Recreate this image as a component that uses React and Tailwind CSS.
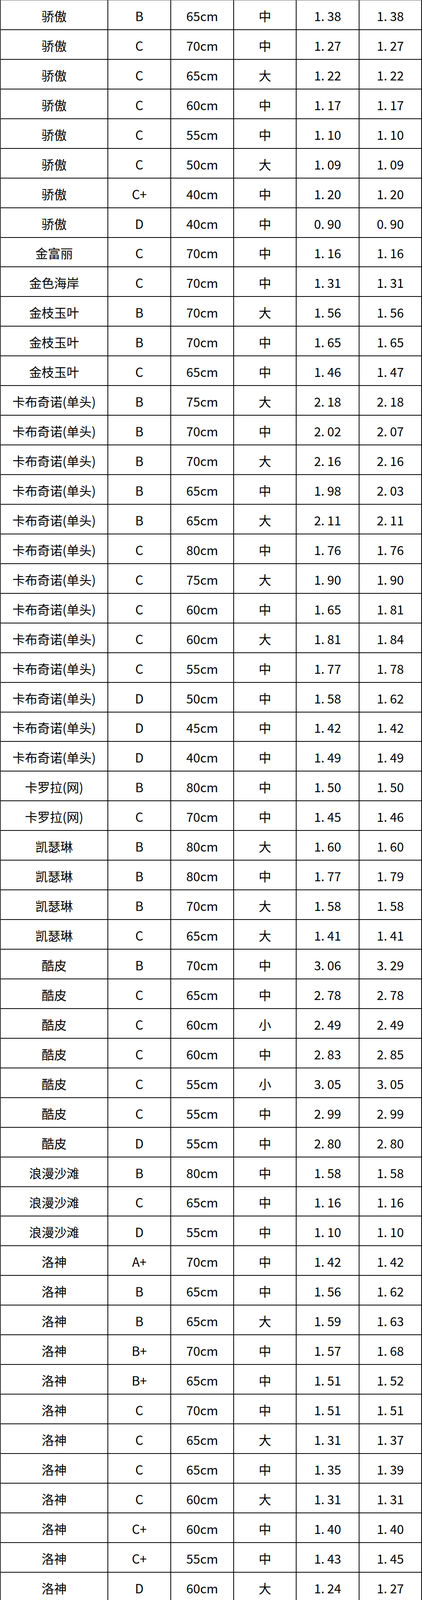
import React from 'react';

const rows = [
  ['骄傲', 'B', '65cm', '中', '1.38', '1.38'],
  ['骄傲', 'C', '70cm', '中', '1.27', '1.27'],
  ['骄傲', 'C', '65cm', '大', '1.22', '1.22'],
  ['骄傲', 'C', '60cm', '中', '1.17', '1.17'],
  ['骄傲', 'C', '55cm', '中', '1.10', '1.10'],
  ['骄傲', 'C', '50cm', '大', '1.09', '1.09'],
  ['骄傲', 'C+', '40cm', '中', '1.20', '1.20'],
  ['骄傲', 'D', '40cm', '中', '0.90', '0.90'],
  ['金富丽', 'C', '70cm', '中', '1.16', '1.16'],
  ['金色海岸', 'C', '70cm', '中', '1.31', '1.31'],
  ['金枝玉叶', 'B', '70cm', '大', '1.56', '1.56'],
  ['金枝玉叶', 'B', '70cm', '中', '1.65', '1.65'],
  ['金枝玉叶', 'C', '65cm', '中', '1.46', '1.47'],
  ['卡布奇诺(单头)', 'B', '75cm', '大', '2.18', '2.18'],
  ['卡布奇诺(单头)', 'B', '70cm', '中', '2.02', '2.07'],
  ['卡布奇诺(单头)', 'B', '70cm', '大', '2.16', '2.16'],
  ['卡布奇诺(单头)', 'B', '65cm', '中', '1.98', '2.03'],
  ['卡布奇诺(单头)', 'B', '65cm', '大', '2.11', '2.11'],
  ['卡布奇诺(单头)', 'C', '80cm', '中', '1.76', '1.76'],
  ['卡布奇诺(单头)', 'C', '75cm', '大', '1.90', '1.90'],
  ['卡布奇诺(单头)', 'C', '60cm', '中', '1.65', '1.81'],
  ['卡布奇诺(单头)', 'C', '60cm', '大', '1.81', '1.84'],
  ['卡布奇诺(单头)', 'C', '55cm', '中', '1.77', '1.78'],
  ['卡布奇诺(单头)', 'D', '50cm', '中', '1.58', '1.62'],
  ['卡布奇诺(单头)', 'D', '45cm', '中', '1.42', '1.42'],
  ['卡布奇诺(单头)', 'D', '40cm', '中', '1.49', '1.49'],
  ['卡罗拉(网)', 'B', '80cm', '中', '1.50', '1.50'],
  ['卡罗拉(网)', 'C', '70cm', '中', '1.45', '1.46'],
  ['凯瑟琳', 'B', '80cm', '大', '1.60', '1.60'],
  ['凯瑟琳', 'B', '80cm', '中', '1.77', '1.79'],
  ['凯瑟琳', 'B', '70cm', '大', '1.58', '1.58'],
  ['凯瑟琳', 'C', '65cm', '大', '1.41', '1.41'],
  ['酷皮', 'B', '70cm', '中', '3.06', '3.29'],
  ['酷皮', 'C', '65cm', '中', '2.78', '2.78'],
  ['酷皮', 'C', '60cm', '小', '2.49', '2.49'],
  ['酷皮', 'C', '60cm', '中', '2.83', '2.85'],
  ['酷皮', 'C', '55cm', '小', '3.05', '3.05'],
  ['酷皮', 'C', '55cm', '中', '2.99', '2.99'],
  ['酷皮', 'D', '55cm', '中', '2.80', '2.80'],
  ['浪漫沙滩', 'B', '80cm', '中', '1.58', '1.58'],
  ['浪漫沙滩', 'C', '65cm', '中', '1.16', '1.16'],
  ['浪漫沙滩', 'D', '55cm', '中', '1.10', '1.10'],
  ['洛神', 'A+', '70cm', '中', '1.42', '1.42'],
  ['洛神', 'B', '65cm', '中', '1.56', '1.62'],
  ['洛神', 'B', '65cm', '大', '1.59', '1.63'],
  ['洛神', 'B+', '70cm', '中', '1.57', '1.68'],
  ['洛神', 'B+', '65cm', '中', '1.51', '1.52'],
  ['洛神', 'C', '70cm', '中', '1.51', '1.51'],
  ['洛神', 'C', '65cm', '大', '1.31', '1.37'],
  ['洛神', 'C', '65cm', '中', '1.35', '1.39'],
  ['洛神', 'C', '60cm', '大', '1.31', '1.31'],
  ['洛神', 'C+', '60cm', '中', '1.40', '1.40'],
  ['洛神', 'C+', '55cm', '中', '1.43', '1.45'],
  ['洛神', 'D', '60cm', '大', '1.24', '1.27'],
  ['洛神', 'D+', '55cm', '中', '1.25', '1.26'],
  ['洛神', 'D+', '50cm', '中', '1.22', '1.23'],
  ['洛神', 'D+', '45cm', '中', '1.26', '1.26'],
  ['洛神', 'D+', '40cm', '中', '1.26', '1.26'],
  ['曼塔', 'B', '70cm', '中', '1.93', '1.98'],
  ['曼塔', 'B', '65cm', '大', '1.89', '1.90'],
  ['曼塔', 'C', '65cm', '中', '1.63', '1.63'],
  ['曼塔', 'C', '60cm', '中', '1.72', '1.72'],
  ['曼塔', 'C', '60cm', '大', '1.63', '1.67'],
  ['曼塔', 'D', '55cm', '中', '1.78', '1.78'],
  ['曼塔', 'D', '50cm', '中', '1.75', '1.77'],
  ['蜜桃雪山', 'B', '70cm', '大', '1.22', '1.26'],
];

// the sheet's font gives the decimal point a half-em cell
function Price({ value }) {
  const [a, b] = value.split('.');
  return (
    <span className="whitespace-nowrap">
      {a}
      <span className="inline-block w-[0.5em]">.</span>
      {b}
    </span>
  );
}

function Cell({ children }) {
  return (
    <div className="flex items-center justify-center overflow-hidden whitespace-nowrap pt-1 border-r-2 border-b-2 border-black">
      {children}
    </div>
  );
}

export default function App() {
  return (
    <div
      className="w-[1080px] h-[5014px] overflow-hidden bg-white text-black text-[32px] leading-[40px] border-l-2 border-t border-l-[#333] border-t-[#666]"
      style={{ fontFamily: '"Liberation Sans Narrow", "Noto Sans CJK SC", "Noto Sans", sans-serif' }}
    >
      {rows.map((r, i) => (
        <div
          key={i}
          className="h-[75.95px] grid grid-cols-[275px_161px_161px_160px_161px_1fr]"
        >
          <Cell>{r[0]}</Cell>
          <Cell>{r[1]}</Cell>
          <Cell>{r[2]}</Cell>
          <Cell>{r[3]}</Cell>
          <Cell><Price value={r[4]} /></Cell>
          <Cell><Price value={r[5]} /></Cell>
        </div>
      ))}
    </div>
  );
}
